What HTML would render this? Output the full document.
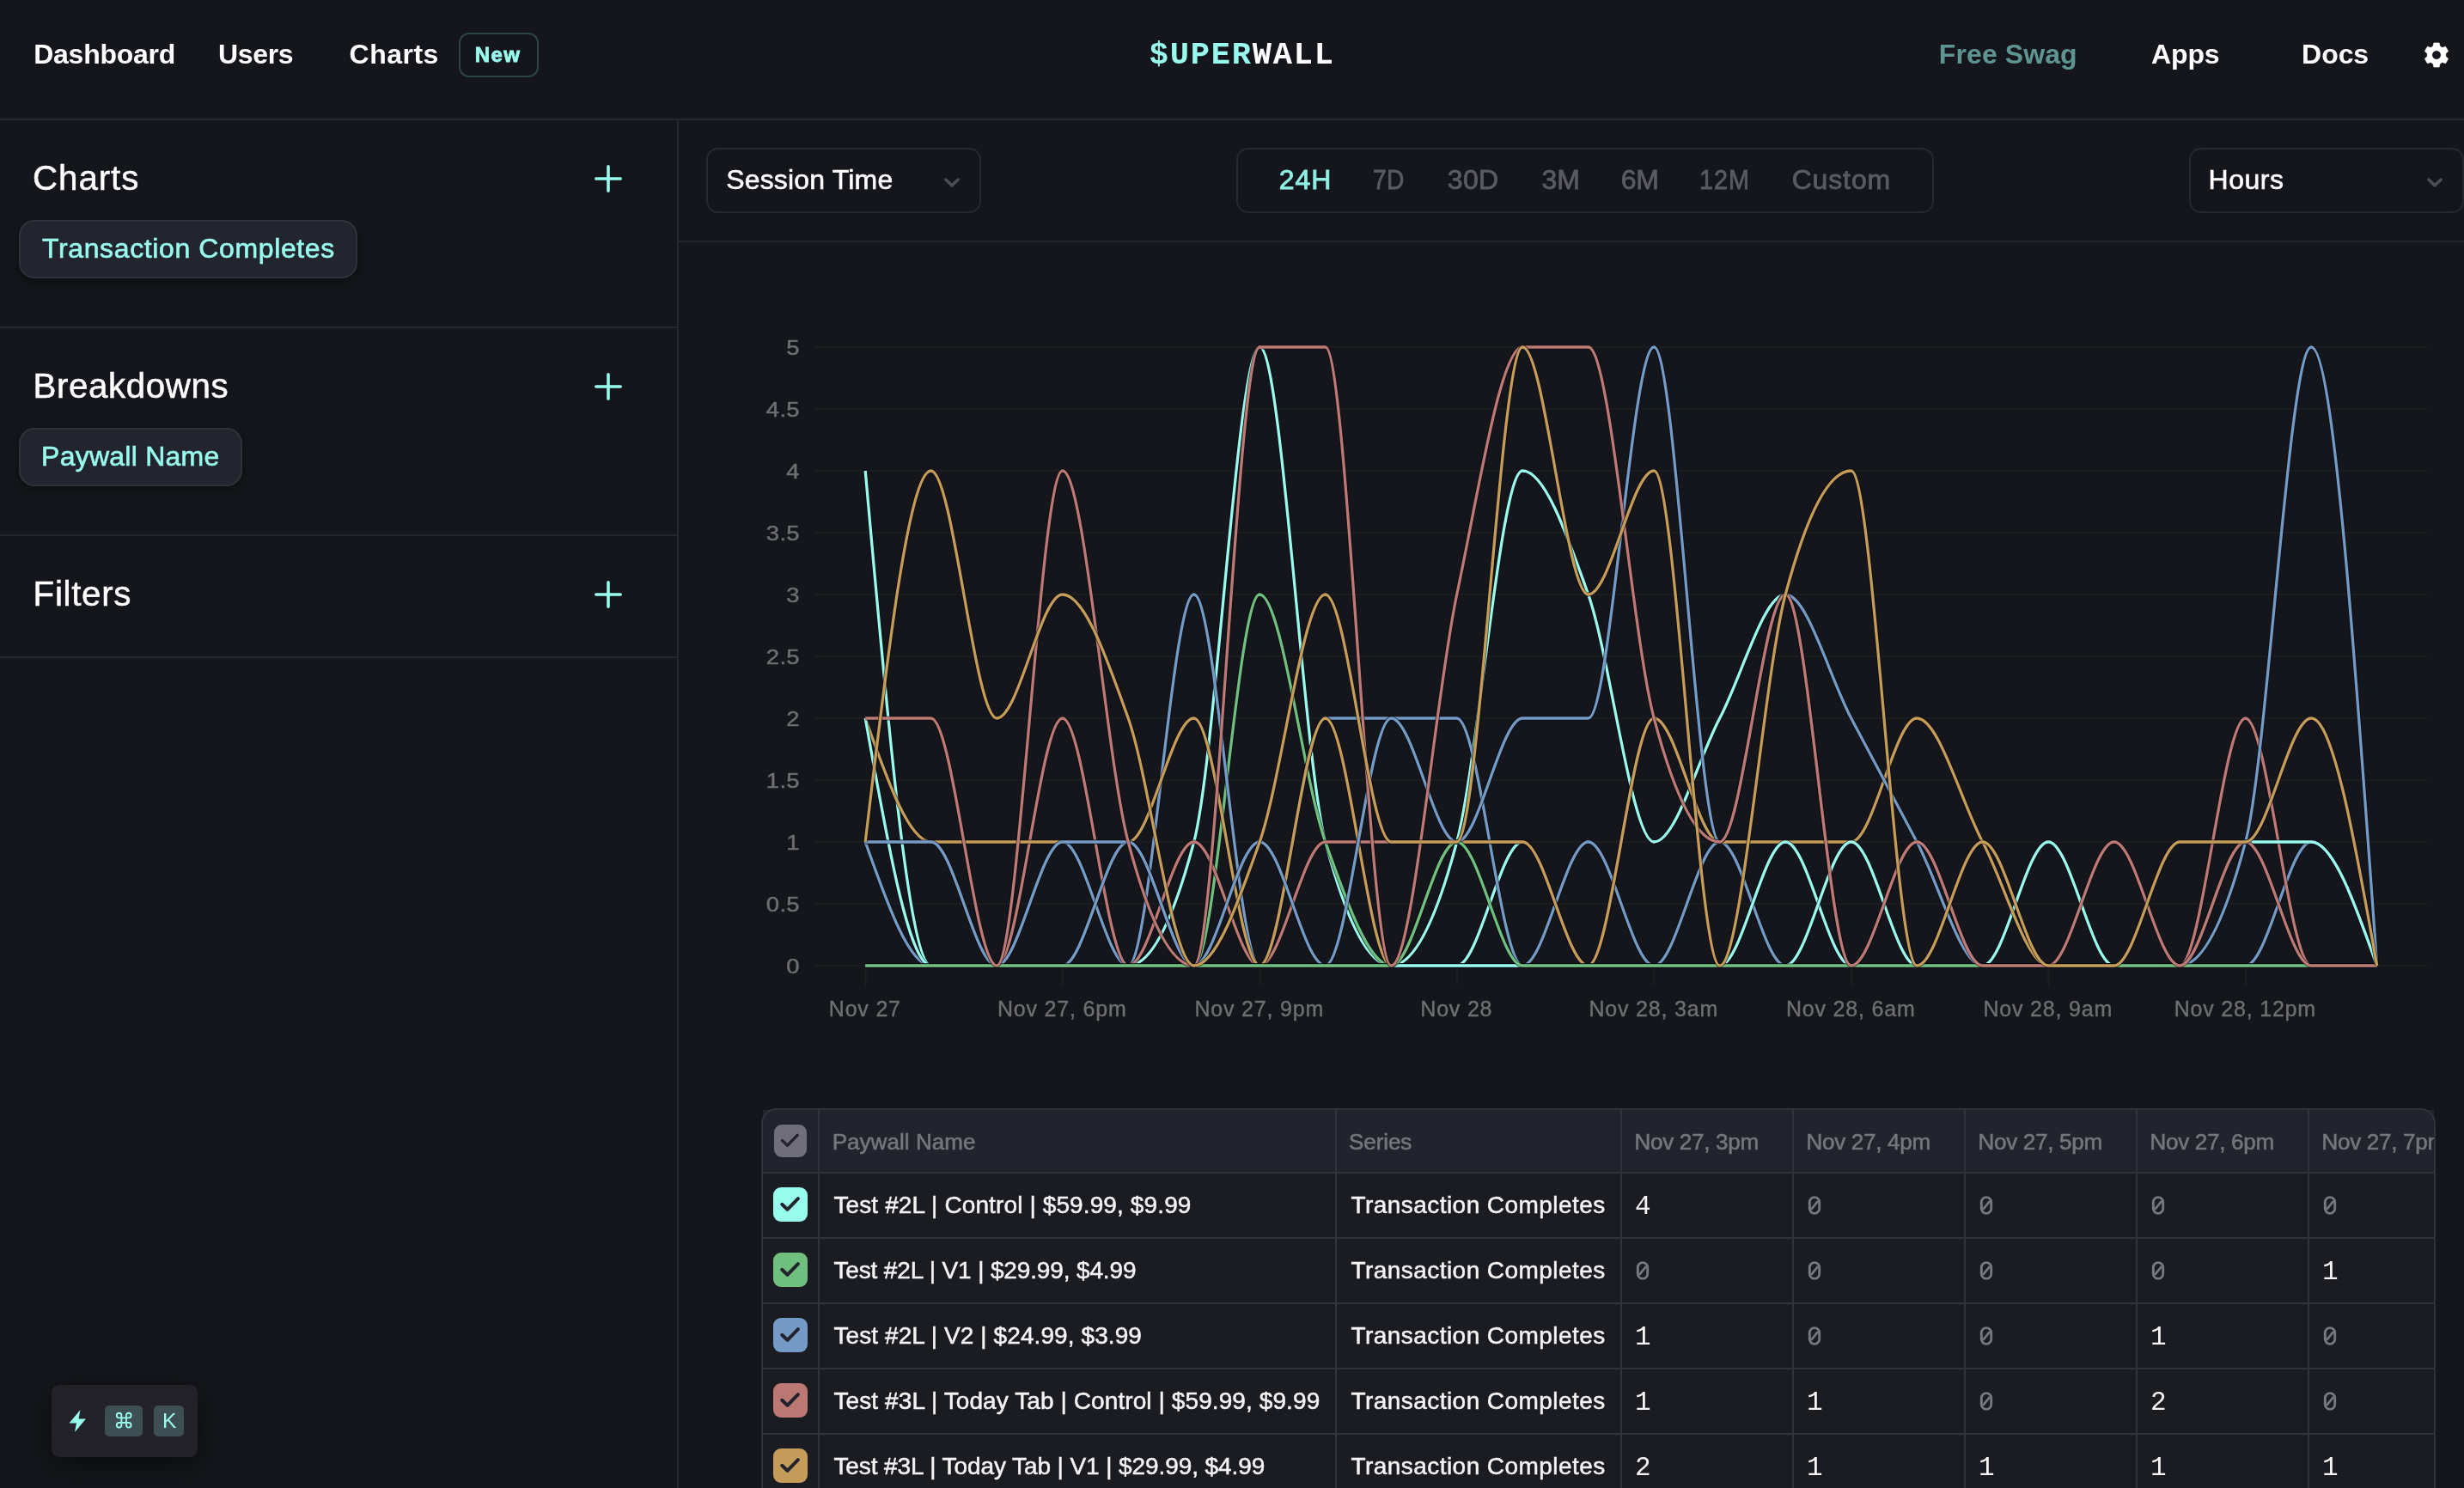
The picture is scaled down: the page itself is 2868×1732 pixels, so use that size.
<!DOCTYPE html>
<html><head><meta charset="utf-8"><title>Superwall Charts</title>
<style>
html,body{margin:0;padding:0;background:#14161b;}
html{width:2868px;height:1732px;overflow:hidden;}
body{width:2868px;height:1732px;position:relative;overflow:hidden;font-family:'Liberation Sans', sans-serif;}
.t{position:absolute;white-space:nowrap;line-height:1;}
.b{position:absolute;}
#w{position:absolute;left:0;top:0;width:2868px;height:1732px;will-change:transform;overflow:hidden;}
</style></head><body><div id="w">
<div class="b" style="left:0px;top:138px;width:2868px;height:2px;background:#25272d"></div>
<div class="t" style="left:39.26px;top:47.1px;font-size:32px;color:#fff;font-weight:700;letter-spacing:-0.270px;font-family:'Liberation Sans', sans-serif;">Dashboard</div>
<div class="t" style="left:253.88px;top:47.1px;font-size:32px;color:#fff;font-weight:700;letter-spacing:-0.315px;font-family:'Liberation Sans', sans-serif;">Users</div>
<div class="t" style="left:406.62px;top:47.1px;font-size:32px;color:#fff;font-weight:700;letter-spacing:0.468px;font-family:'Liberation Sans', sans-serif;">Charts</div>
<div class="b" style="left:534px;top:38px;width:93px;height:52px;border:2px solid #2c4647;border-radius:12px;box-sizing:border-box"></div>
<div class="t" style="left:552.78px;top:52.1px;font-size:24px;color:#98fbee;font-weight:700;letter-spacing:1.440px;font-family:'Liberation Sans', sans-serif;-webkit-text-stroke:0.8px #98fbee">New</div>
<div class="t" style="left:1337.64px;top:46.1px;font-size:37px;color:#fff;font-weight:700;letter-spacing:1.823px;font-family:'Liberation Mono', monospace;"><span style="color:#98fbee">$UPER</span><span style="color:#fff">WALL</span></div>
<div class="t" style="left:2256.82px;top:47.2px;font-size:32px;color:#5e9591;font-weight:700;letter-spacing:0.090px;font-family:'Liberation Sans', sans-serif;">Free Swag</div>
<div class="t" style="left:2504.10px;top:47.2px;font-size:32px;color:#fff;font-weight:700;letter-spacing:-0.180px;font-family:'Liberation Sans', sans-serif;">Apps</div>
<div class="t" style="left:2679.10px;top:47.2px;font-size:32px;color:#fff;font-weight:700;letter-spacing:-0.060px;font-family:'Liberation Sans', sans-serif;">Docs</div>
<svg style="position:absolute;left:2818px;top:46px" width="36" height="36" viewBox="0 0 36 36"><path fill="#fff" fill-rule="evenodd" stroke="#fff" stroke-width="0.7" stroke-linejoin="round" d="M21.96,7.95L21.11,3.99L14.89,3.99L14.04,7.95A10.8,10.8 0 0 0 11.28,9.55L7.42,8.31L4.31,13.68L7.32,16.40A10.8,10.8 0 0 0 7.32,19.60L4.31,22.32L7.42,27.69L11.28,26.45A10.8,10.8 0 0 0 14.04,28.05L14.89,32.01L21.11,32.01L21.96,28.05A10.8,10.8 0 0 0 24.72,26.45L28.58,27.69L31.69,22.32L28.68,19.60A10.8,10.8 0 0 0 28.68,16.40L31.69,13.68L28.58,8.31L24.72,9.55A10.8,10.8 0 0 0 21.96,7.95ZM23.3,18A5.3,5.3 0 1 0 12.7,18A5.3,5.3 0 1 0 23.3,18Z"/></svg>
<div class="b" style="left:788px;top:140px;width:2px;height:1592px;background:#25272d"></div>
<div class="t" style="left:38.04px;top:187.9px;font-size:40.3px;color:#fff;font-weight:400;letter-spacing:0.936px;font-family:'Liberation Sans', sans-serif;-webkit-text-stroke:0.5px #fff">Charts</div>
<svg style="position:absolute;left:692px;top:192px" width="32" height="32" viewBox="0 0 32 32"><path d="M16 1.8v28.4M1.8 16h28.4" stroke="#98fbee" stroke-width="3.6" stroke-linecap="round" fill="none"/></svg>
<div class="b" style="left:22.3px;top:255.9px;width:393.7px;height:67.9px;background:#23252e;border:2px solid #30323a;border-radius:18px;box-sizing:border-box;box-shadow:0 4px 10px rgba(0,0,0,.35)"></div>
<div class="t" style="left:49.00px;top:273.1px;font-size:32px;color:#98fbee;font-weight:400;letter-spacing:0.621px;font-family:'Liberation Sans', sans-serif;-webkit-text-stroke:0.6px #98fbee">Transaction Completes</div>
<div class="b" style="left:0px;top:380px;width:788px;height:2px;background:#25272d"></div>
<div class="t" style="left:38.58px;top:429.9px;font-size:40.3px;color:#fff;font-weight:400;letter-spacing:0.600px;font-family:'Liberation Sans', sans-serif;-webkit-text-stroke:0.5px #fff">Breakdowns</div>
<svg style="position:absolute;left:692px;top:434px" width="32" height="32" viewBox="0 0 32 32"><path d="M16 1.8v28.4M1.8 16h28.4" stroke="#98fbee" stroke-width="3.6" stroke-linecap="round" fill="none"/></svg>
<div class="b" style="left:22.3px;top:497.9px;width:259.4px;height:67.9px;background:#23252e;border:2px solid #30323a;border-radius:18px;box-sizing:border-box;box-shadow:0 4px 10px rgba(0,0,0,.35)"></div>
<div class="t" style="left:48.10px;top:514.9px;font-size:32px;color:#98fbee;font-weight:400;letter-spacing:0.245px;font-family:'Liberation Sans', sans-serif;-webkit-text-stroke:0.6px #98fbee">Paywall Name</div>
<div class="b" style="left:0px;top:622px;width:788px;height:2px;background:#25272d"></div>
<div class="t" style="left:38.58px;top:671.7px;font-size:40.3px;color:#fff;font-weight:400;letter-spacing:0.690px;font-family:'Liberation Sans', sans-serif;-webkit-text-stroke:0.5px #fff">Filters</div>
<svg style="position:absolute;left:692px;top:676px" width="32" height="32" viewBox="0 0 32 32"><path d="M16 1.8v28.4M1.8 16h28.4" stroke="#98fbee" stroke-width="3.6" stroke-linecap="round" fill="none"/></svg>
<div class="b" style="left:0px;top:764px;width:788px;height:2px;background:#25272d"></div>
<div class="b" style="left:60px;top:1612px;width:170px;height:84px;background:#232228;border-radius:9px;box-shadow:0 10px 30px rgba(0,0,0,.45)"></div>
<svg style="position:absolute;left:78px;top:1640px" width="24" height="28" viewBox="0 0 24 28"><path d="M15.5 1 L2.5 16.5 H11 L9 27 L22 11.5 H13.5 Z" fill="#98fbee"/></svg>
<div class="b" style="left:122px;top:1636px;width:44px;height:36px;background:#3e4f53;border-radius:5px"></div>
<div class="b" style="left:179px;top:1636px;width:35px;height:36px;background:#3e4f53;border-radius:5px"></div>
<svg style="position:absolute;left:132.8px;top:1642.1px" width="22.4" height="22.4" viewBox="0 0 24 24" fill="none" stroke="#98fbee" stroke-width="2" stroke-linecap="round" stroke-linejoin="round"><path d="M18 3a3 3 0 0 0-3 3v12a3 3 0 0 0 3 3 3 3 0 0 0 3-3 3 3 0 0 0-3-3H6a3 3 0 0 0-3 3 3 3 0 0 0 3 3 3 3 0 0 0 3-3V6a3 3 0 0 0-3-3 3 3 0 0 0-3 3 3 3 0 0 0 3 3h12a3 3 0 0 0 3-3 3 3 0 0 0-3-3z"/></svg>
<div class="t" style="left:189.00px;top:1641.5px;font-size:24.5px;color:#98fbee;font-weight:400;letter-spacing:0.000px;font-family:'Liberation Sans', sans-serif;">K</div>
<div class="b" style="left:822px;top:172px;width:320px;height:76px;border:2px solid #26282d;border-radius:14px;box-sizing:border-box"></div>
<div class="t" style="left:845.16px;top:192.9px;font-size:32px;color:#fff;font-weight:400;letter-spacing:0.180px;font-family:'Liberation Sans', sans-serif;-webkit-text-stroke:0.6px #fff">Session Time</div>
<svg style="position:absolute;left:1098px;top:205.70000000000002px" width="20" height="13.4" viewBox="0 0 24 16"><path d="M3.4 3.6 L12 11.8 L20.6 3.6" stroke="#4d4e54" stroke-width="4.3" fill="none" stroke-linecap="round" stroke-linejoin="round"/></svg>
<div class="b" style="left:1439px;top:172px;width:812px;height:76px;border:2px solid #26282d;border-radius:14px;box-sizing:border-box"></div>
<div class="t" style="left:1488.64px;top:193.4px;font-size:32px;color:#8fefe3;font-weight:400;letter-spacing:0.990px;font-family:'Liberation Sans', sans-serif;-webkit-text-stroke:0.85px #8fefe3">24H</div>
<div class="t" style="left:1598.02px;top:193.4px;font-size:32px;color:#5a5b61;font-weight:400;letter-spacing:0.360px;font-family:'Liberation Sans', sans-serif;-webkit-text-stroke:0.85px #5a5b61;transform:scaleX(0.88);transform-origin:0 50%">7D</div>
<div class="t" style="left:1684.78px;top:193.4px;font-size:32px;color:#5a5b61;font-weight:400;letter-spacing:0.360px;font-family:'Liberation Sans', sans-serif;-webkit-text-stroke:0.85px #5a5b61">30D</div>
<div class="t" style="left:1794.54px;top:193.4px;font-size:32px;color:#5a5b61;font-weight:400;letter-spacing:-0.180px;font-family:'Liberation Sans', sans-serif;-webkit-text-stroke:0.85px #5a5b61">3M</div>
<div class="t" style="left:1886.64px;top:193.4px;font-size:32px;color:#5a5b61;font-weight:400;letter-spacing:-0.180px;font-family:'Liberation Sans', sans-serif;-webkit-text-stroke:0.85px #5a5b61">6M</div>
<div class="t" style="left:1978.12px;top:193.4px;font-size:32px;color:#5a5b61;font-weight:400;letter-spacing:1.080px;font-family:'Liberation Sans', sans-serif;-webkit-text-stroke:0.85px #5a5b61;transform:scaleX(0.9);transform-origin:0 50%">12M</div>
<div class="t" style="left:2085.64px;top:193.4px;font-size:32px;color:#5a5b61;font-weight:400;letter-spacing:0.864px;font-family:'Liberation Sans', sans-serif;-webkit-text-stroke:0.85px #5a5b61">Custom</div>
<div class="b" style="left:2548px;top:172px;width:320px;height:76px;border:2px solid #26282d;border-radius:14px;box-sizing:border-box"></div>
<div class="t" style="left:2570.50px;top:192.9px;font-size:32px;color:#fff;font-weight:400;letter-spacing:0.540px;font-family:'Liberation Sans', sans-serif;-webkit-text-stroke:0.6px #fff">Hours</div>
<svg style="position:absolute;left:2824px;top:205.70000000000002px" width="20" height="13.4" viewBox="0 0 24 16"><path d="M3.4 3.6 L12 11.8 L20.6 3.6" stroke="#4d4e54" stroke-width="4.3" fill="none" stroke-linecap="round" stroke-linejoin="round"/></svg>
<div class="b" style="left:790px;top:280px;width:2078px;height:2px;background:#25272d"></div>
<svg class="chart" width="2868" height="1732" viewBox="0 0 2868 1732" style="position:absolute;left:0;top:0">
<rect x="948" y="403" width="1878" height="2" fill="#1b1c1f"/>
<rect x="948" y="475" width="1878" height="2" fill="#1b1c1f"/>
<rect x="948" y="547" width="1878" height="2" fill="#1b1c1f"/>
<rect x="948" y="619" width="1878" height="2" fill="#1b1c1f"/>
<rect x="948" y="691" width="1878" height="2" fill="#1b1c1f"/>
<rect x="948" y="763" width="1878" height="2" fill="#1b1c1f"/>
<rect x="948" y="835" width="1878" height="2" fill="#1b1c1f"/>
<rect x="948" y="907" width="1878" height="2" fill="#1b1c1f"/>
<rect x="948" y="979" width="1878" height="2" fill="#1b1c1f"/>
<rect x="948" y="1051" width="1878" height="2" fill="#1b1c1f"/>
<rect x="948" y="1123" width="1878" height="2" fill="#1b1c1f"/>
<rect x="1006.5" y="1125" width="2" height="22" fill="#1d1e22"/>
<rect x="1236.0" y="1125" width="2" height="22" fill="#1d1e22"/>
<rect x="1465.5" y="1125" width="2" height="22" fill="#1d1e22"/>
<rect x="1695.0" y="1125" width="2" height="22" fill="#1d1e22"/>
<rect x="1924.5" y="1125" width="2" height="22" fill="#1d1e22"/>
<rect x="2154.0" y="1125" width="2" height="22" fill="#1d1e22"/>
<rect x="2383.5" y="1125" width="2" height="22" fill="#1d1e22"/>
<rect x="2613.0" y="1125" width="2" height="22" fill="#1d1e22"/>
<g fill="none" stroke-linejoin="round" stroke-linecap="butt">
<path d="M1007.2,548.0C1032.7,836.0 1058.2,1124.0 1083.7,1124.0L1160.2,1124.0L1236.7,1124.0L1313.2,1124.0C1338.7,1124.0 1364.2,1076.0 1389.7,980.0C1415.2,884.0 1440.7,404.0 1466.2,404.0C1491.7,404.0 1517.2,884.0 1542.7,980.0C1568.2,1076.0 1593.7,1124.0 1619.2,1124.0C1644.7,1124.0 1670.2,1076.0 1695.7,980.0C1721.2,884.0 1746.7,548.0 1772.2,548.0C1797.7,548.0 1823.2,620.0 1848.7,692.0C1874.2,764.0 1899.7,980.0 1925.2,980.0C1950.7,980.0 1976.2,884.0 2001.7,836.0C2027.2,788.0 2052.7,692.0 2078.2,692.0C2103.7,692.0 2129.2,1124.0 2154.7,1124.0L2231.2,1124.0L2307.7,1124.0C2333.2,1124.0 2358.7,980.0 2384.2,980.0C2409.7,980.0 2435.2,1124.0 2460.7,1124.0L2537.2,1124.0L2613.7,1124.0L2690.2,1124.0L2766.7,1124.0" stroke="#0a0a12" stroke-opacity="0.7" stroke-width="4.9"/>
<path d="M1007.2,548.0C1032.7,836.0 1058.2,1124.0 1083.7,1124.0L1160.2,1124.0L1236.7,1124.0L1313.2,1124.0C1338.7,1124.0 1364.2,1076.0 1389.7,980.0C1415.2,884.0 1440.7,404.0 1466.2,404.0C1491.7,404.0 1517.2,884.0 1542.7,980.0C1568.2,1076.0 1593.7,1124.0 1619.2,1124.0C1644.7,1124.0 1670.2,1076.0 1695.7,980.0C1721.2,884.0 1746.7,548.0 1772.2,548.0C1797.7,548.0 1823.2,620.0 1848.7,692.0C1874.2,764.0 1899.7,980.0 1925.2,980.0C1950.7,980.0 1976.2,884.0 2001.7,836.0C2027.2,788.0 2052.7,692.0 2078.2,692.0C2103.7,692.0 2129.2,1124.0 2154.7,1124.0L2231.2,1124.0L2307.7,1124.0C2333.2,1124.0 2358.7,980.0 2384.2,980.0C2409.7,980.0 2435.2,1124.0 2460.7,1124.0L2537.2,1124.0L2613.7,1124.0L2690.2,1124.0L2766.7,1124.0" stroke="#98fbee" stroke-width="3.3"/>
<path d="M1007.2,1124.0L1083.7,1124.0L1160.2,1124.0L1236.7,1124.0L1313.2,1124.0L1389.7,1124.0L1466.2,1124.0L1542.7,1124.0L1619.2,1124.0L1695.7,1124.0C1721.2,1124.0 1746.7,980.0 1772.2,980.0C1797.7,980.0 1823.2,1124.0 1848.7,1124.0L1925.2,1124.0L2001.7,1124.0L2078.2,1124.0L2154.7,1124.0L2231.2,1124.0L2307.7,1124.0L2384.2,1124.0L2460.7,1124.0L2537.2,1124.0L2613.7,1124.0L2690.2,1124.0L2766.7,1124.0" stroke="#0a0a12" stroke-opacity="0.7" stroke-width="4.9"/>
<path d="M1007.2,1124.0L1083.7,1124.0L1160.2,1124.0L1236.7,1124.0L1313.2,1124.0L1389.7,1124.0L1466.2,1124.0L1542.7,1124.0L1619.2,1124.0L1695.7,1124.0C1721.2,1124.0 1746.7,980.0 1772.2,980.0C1797.7,980.0 1823.2,1124.0 1848.7,1124.0L1925.2,1124.0L2001.7,1124.0L2078.2,1124.0L2154.7,1124.0L2231.2,1124.0L2307.7,1124.0L2384.2,1124.0L2460.7,1124.0L2537.2,1124.0L2613.7,1124.0L2690.2,1124.0L2766.7,1124.0" stroke="#98fbee" stroke-width="3.3"/>
<path d="M1007.2,1124.0L1083.7,1124.0L1160.2,1124.0L1236.7,1124.0C1262.2,1124.0 1287.7,980.0 1313.2,980.0C1338.7,980.0 1364.2,1124.0 1389.7,1124.0C1415.2,1124.0 1440.7,692.0 1466.2,692.0C1491.7,692.0 1517.2,908.0 1542.7,980.0C1568.2,1052.0 1593.7,1124.0 1619.2,1124.0L1695.7,1124.0L1772.2,1124.0L1848.7,1124.0L1925.2,1124.0L2001.7,1124.0L2078.2,1124.0L2154.7,1124.0L2231.2,1124.0L2307.7,1124.0L2384.2,1124.0L2460.7,1124.0L2537.2,1124.0L2613.7,1124.0L2690.2,1124.0L2766.7,1124.0" stroke="#0a0a12" stroke-opacity="0.7" stroke-width="4.9"/>
<path d="M1007.2,1124.0L1083.7,1124.0L1160.2,1124.0L1236.7,1124.0C1262.2,1124.0 1287.7,980.0 1313.2,980.0C1338.7,980.0 1364.2,1124.0 1389.7,1124.0C1415.2,1124.0 1440.7,692.0 1466.2,692.0C1491.7,692.0 1517.2,908.0 1542.7,980.0C1568.2,1052.0 1593.7,1124.0 1619.2,1124.0L1695.7,1124.0L1772.2,1124.0L1848.7,1124.0L1925.2,1124.0L2001.7,1124.0L2078.2,1124.0L2154.7,1124.0L2231.2,1124.0L2307.7,1124.0L2384.2,1124.0L2460.7,1124.0L2537.2,1124.0L2613.7,1124.0L2690.2,1124.0L2766.7,1124.0" stroke="#6fc07e" stroke-width="3.3"/>
<path d="M1007.2,980.0C1032.7,1052.0 1058.2,1124.0 1083.7,1124.0L1160.2,1124.0C1185.7,1124.0 1211.2,980.0 1236.7,980.0C1262.2,980.0 1287.7,1124.0 1313.2,1124.0C1338.7,1124.0 1364.2,692.0 1389.7,692.0C1415.2,692.0 1440.7,1124.0 1466.2,1124.0C1491.7,1124.0 1517.2,836.0 1542.7,836.0L1619.2,836.0L1695.7,836.0C1721.2,836.0 1746.7,1124.0 1772.2,1124.0C1797.7,1124.0 1823.2,980.0 1848.7,980.0C1874.2,980.0 1899.7,1124.0 1925.2,1124.0C1950.7,1124.0 1976.2,980.0 2001.7,980.0C2027.2,980.0 2052.7,1124.0 2078.2,1124.0L2154.7,1124.0L2231.2,1124.0L2307.7,1124.0L2384.2,1124.0L2460.7,1124.0L2537.2,1124.0L2613.7,1124.0C2639.2,1124.0 2664.7,980.0 2690.2,980.0C2715.7,980.0 2741.2,1052.0 2766.7,1124.0" stroke="#0a0a12" stroke-opacity="0.7" stroke-width="4.9"/>
<path d="M1007.2,980.0C1032.7,1052.0 1058.2,1124.0 1083.7,1124.0L1160.2,1124.0C1185.7,1124.0 1211.2,980.0 1236.7,980.0C1262.2,980.0 1287.7,1124.0 1313.2,1124.0C1338.7,1124.0 1364.2,692.0 1389.7,692.0C1415.2,692.0 1440.7,1124.0 1466.2,1124.0C1491.7,1124.0 1517.2,836.0 1542.7,836.0L1619.2,836.0L1695.7,836.0C1721.2,836.0 1746.7,1124.0 1772.2,1124.0C1797.7,1124.0 1823.2,980.0 1848.7,980.0C1874.2,980.0 1899.7,1124.0 1925.2,1124.0C1950.7,1124.0 1976.2,980.0 2001.7,980.0C2027.2,980.0 2052.7,1124.0 2078.2,1124.0L2154.7,1124.0L2231.2,1124.0L2307.7,1124.0L2384.2,1124.0L2460.7,1124.0L2537.2,1124.0L2613.7,1124.0C2639.2,1124.0 2664.7,980.0 2690.2,980.0C2715.7,980.0 2741.2,1052.0 2766.7,1124.0" stroke="#739bc5" stroke-width="3.3"/>
<path d="M1007.2,980.0L1083.7,980.0C1109.2,980.0 1134.7,1124.0 1160.2,1124.0C1185.7,1124.0 1211.2,836.0 1236.7,836.0C1262.2,836.0 1287.7,1124.0 1313.2,1124.0C1338.7,1124.0 1364.2,980.0 1389.7,980.0C1415.2,980.0 1440.7,1124.0 1466.2,1124.0C1491.7,1124.0 1517.2,980.0 1542.7,980.0L1619.2,980.0L1695.7,980.0L1772.2,980.0C1797.7,980.0 1823.2,1124.0 1848.7,1124.0C1874.2,1124.0 1899.7,836.0 1925.2,836.0C1950.7,836.0 1976.2,980.0 2001.7,980.0C2027.2,980.0 2052.7,692.0 2078.2,692.0C2103.7,692.0 2129.2,1124.0 2154.7,1124.0C2180.2,1124.0 2205.7,980.0 2231.2,980.0C2256.7,980.0 2282.2,1124.0 2307.7,1124.0L2384.2,1124.0L2460.7,1124.0L2537.2,1124.0C2562.7,1124.0 2588.2,836.0 2613.7,836.0C2639.2,836.0 2664.7,1124.0 2690.2,1124.0L2766.7,1124.0" stroke="#0a0a12" stroke-opacity="0.7" stroke-width="4.9"/>
<path d="M1007.2,980.0L1083.7,980.0C1109.2,980.0 1134.7,1124.0 1160.2,1124.0C1185.7,1124.0 1211.2,836.0 1236.7,836.0C1262.2,836.0 1287.7,1124.0 1313.2,1124.0C1338.7,1124.0 1364.2,980.0 1389.7,980.0C1415.2,980.0 1440.7,1124.0 1466.2,1124.0C1491.7,1124.0 1517.2,980.0 1542.7,980.0L1619.2,980.0L1695.7,980.0L1772.2,980.0C1797.7,980.0 1823.2,1124.0 1848.7,1124.0C1874.2,1124.0 1899.7,836.0 1925.2,836.0C1950.7,836.0 1976.2,980.0 2001.7,980.0C2027.2,980.0 2052.7,692.0 2078.2,692.0C2103.7,692.0 2129.2,1124.0 2154.7,1124.0C2180.2,1124.0 2205.7,980.0 2231.2,980.0C2256.7,980.0 2282.2,1124.0 2307.7,1124.0L2384.2,1124.0L2460.7,1124.0L2537.2,1124.0C2562.7,1124.0 2588.2,836.0 2613.7,836.0C2639.2,836.0 2664.7,1124.0 2690.2,1124.0L2766.7,1124.0" stroke="#bd7973" stroke-width="3.3"/>
<path d="M1007.2,836.0C1032.7,908.0 1058.2,980.0 1083.7,980.0L1160.2,980.0L1236.7,980.0L1313.2,980.0C1338.7,980.0 1364.2,836.0 1389.7,836.0C1415.2,836.0 1440.7,1124.0 1466.2,1124.0C1491.7,1124.0 1517.2,836.0 1542.7,836.0C1568.2,836.0 1593.7,1124.0 1619.2,1124.0C1644.7,1124.0 1670.2,980.0 1695.7,980.0L1772.2,980.0C1797.7,980.0 1823.2,1124.0 1848.7,1124.0C1874.2,1124.0 1899.7,836.0 1925.2,836.0C1950.7,836.0 1976.2,980.0 2001.7,980.0L2078.2,980.0L2154.7,980.0C2180.2,980.0 2205.7,836.0 2231.2,836.0C2256.7,836.0 2282.2,932.0 2307.7,980.0C2333.2,1028.0 2358.7,1124.0 2384.2,1124.0L2460.7,1124.0L2537.2,1124.0L2613.7,1124.0L2690.2,1124.0L2766.7,1124.0" stroke="#0a0a12" stroke-opacity="0.7" stroke-width="4.9"/>
<path d="M1007.2,836.0C1032.7,908.0 1058.2,980.0 1083.7,980.0L1160.2,980.0L1236.7,980.0L1313.2,980.0C1338.7,980.0 1364.2,836.0 1389.7,836.0C1415.2,836.0 1440.7,1124.0 1466.2,1124.0C1491.7,1124.0 1517.2,836.0 1542.7,836.0C1568.2,836.0 1593.7,1124.0 1619.2,1124.0C1644.7,1124.0 1670.2,980.0 1695.7,980.0L1772.2,980.0C1797.7,980.0 1823.2,1124.0 1848.7,1124.0C1874.2,1124.0 1899.7,836.0 1925.2,836.0C1950.7,836.0 1976.2,980.0 2001.7,980.0L2078.2,980.0L2154.7,980.0C2180.2,980.0 2205.7,836.0 2231.2,836.0C2256.7,836.0 2282.2,932.0 2307.7,980.0C2333.2,1028.0 2358.7,1124.0 2384.2,1124.0L2460.7,1124.0L2537.2,1124.0L2613.7,1124.0L2690.2,1124.0L2766.7,1124.0" stroke="#c59c58" stroke-width="3.3"/>
<path d="M1007.2,836.0C1032.7,980.0 1058.2,1124.0 1083.7,1124.0L1160.2,1124.0L1236.7,1124.0L1313.2,1124.0L1389.7,1124.0L1466.2,1124.0L1542.7,1124.0L1619.2,1124.0L1695.7,1124.0L1772.2,1124.0L1848.7,1124.0L1925.2,1124.0L2001.7,1124.0C2027.2,1124.0 2052.7,980.0 2078.2,980.0C2103.7,980.0 2129.2,1124.0 2154.7,1124.0L2231.2,1124.0L2307.7,1124.0L2384.2,1124.0L2460.7,1124.0L2537.2,1124.0L2613.7,1124.0L2690.2,1124.0L2766.7,1124.0" stroke="#0a0a12" stroke-opacity="0.7" stroke-width="4.9"/>
<path d="M1007.2,836.0C1032.7,980.0 1058.2,1124.0 1083.7,1124.0L1160.2,1124.0L1236.7,1124.0L1313.2,1124.0L1389.7,1124.0L1466.2,1124.0L1542.7,1124.0L1619.2,1124.0L1695.7,1124.0L1772.2,1124.0L1848.7,1124.0L1925.2,1124.0L2001.7,1124.0C2027.2,1124.0 2052.7,980.0 2078.2,980.0C2103.7,980.0 2129.2,1124.0 2154.7,1124.0L2231.2,1124.0L2307.7,1124.0L2384.2,1124.0L2460.7,1124.0L2537.2,1124.0L2613.7,1124.0L2690.2,1124.0L2766.7,1124.0" stroke="#98fbee" stroke-width="3.3"/>
<path d="M1007.2,980.0L1083.7,980.0C1109.2,980.0 1134.7,1124.0 1160.2,1124.0L1236.7,1124.0C1262.2,1124.0 1287.7,980.0 1313.2,980.0C1338.7,980.0 1364.2,1124.0 1389.7,1124.0C1415.2,1124.0 1440.7,980.0 1466.2,980.0C1491.7,980.0 1517.2,1124.0 1542.7,1124.0C1568.2,1124.0 1593.7,836.0 1619.2,836.0C1644.7,836.0 1670.2,980.0 1695.7,980.0C1721.2,980.0 1746.7,836.0 1772.2,836.0L1848.7,836.0C1874.2,836.0 1899.7,404.0 1925.2,404.0C1950.7,404.0 1976.2,980.0 2001.7,980.0C2027.2,980.0 2052.7,692.0 2078.2,692.0C2103.7,692.0 2129.2,788.0 2154.7,836.0C2180.2,884.0 2205.7,932.0 2231.2,980.0C2256.7,1028.0 2282.2,1124.0 2307.7,1124.0L2384.2,1124.0L2460.7,1124.0L2537.2,1124.0C2562.7,1124.0 2588.2,1076.0 2613.7,980.0C2639.2,884.0 2664.7,404.0 2690.2,404.0C2715.7,404.0 2741.2,764.0 2766.7,1124.0" stroke="#0a0a12" stroke-opacity="0.7" stroke-width="4.9"/>
<path d="M1007.2,980.0L1083.7,980.0C1109.2,980.0 1134.7,1124.0 1160.2,1124.0L1236.7,1124.0C1262.2,1124.0 1287.7,980.0 1313.2,980.0C1338.7,980.0 1364.2,1124.0 1389.7,1124.0C1415.2,1124.0 1440.7,980.0 1466.2,980.0C1491.7,980.0 1517.2,1124.0 1542.7,1124.0C1568.2,1124.0 1593.7,836.0 1619.2,836.0C1644.7,836.0 1670.2,980.0 1695.7,980.0C1721.2,980.0 1746.7,836.0 1772.2,836.0L1848.7,836.0C1874.2,836.0 1899.7,404.0 1925.2,404.0C1950.7,404.0 1976.2,980.0 2001.7,980.0C2027.2,980.0 2052.7,692.0 2078.2,692.0C2103.7,692.0 2129.2,788.0 2154.7,836.0C2180.2,884.0 2205.7,932.0 2231.2,980.0C2256.7,1028.0 2282.2,1124.0 2307.7,1124.0L2384.2,1124.0L2460.7,1124.0L2537.2,1124.0C2562.7,1124.0 2588.2,1076.0 2613.7,980.0C2639.2,884.0 2664.7,404.0 2690.2,404.0C2715.7,404.0 2741.2,764.0 2766.7,1124.0" stroke="#739bc5" stroke-width="3.3"/>
<path d="M1007.2,1124.0L1083.7,1124.0L1160.2,1124.0C1185.7,1124.0 1211.2,980.0 1236.7,980.0L1313.2,980.0C1338.7,980.0 1364.2,1124.0 1389.7,1124.0L1466.2,1124.0L1542.7,1124.0L1619.2,1124.0L1695.7,1124.0L1772.2,1124.0L1848.7,1124.0L1925.2,1124.0L2001.7,1124.0L2078.2,1124.0L2154.7,1124.0L2231.2,1124.0L2307.7,1124.0L2384.2,1124.0L2460.7,1124.0L2537.2,1124.0L2613.7,1124.0L2690.2,1124.0L2766.7,1124.0" stroke="#0a0a12" stroke-opacity="0.7" stroke-width="4.9"/>
<path d="M1007.2,1124.0L1083.7,1124.0L1160.2,1124.0C1185.7,1124.0 1211.2,980.0 1236.7,980.0L1313.2,980.0C1338.7,980.0 1364.2,1124.0 1389.7,1124.0L1466.2,1124.0L1542.7,1124.0L1619.2,1124.0L1695.7,1124.0L1772.2,1124.0L1848.7,1124.0L1925.2,1124.0L2001.7,1124.0L2078.2,1124.0L2154.7,1124.0L2231.2,1124.0L2307.7,1124.0L2384.2,1124.0L2460.7,1124.0L2537.2,1124.0L2613.7,1124.0L2690.2,1124.0L2766.7,1124.0" stroke="#739bc5" stroke-width="3.3"/>
<path d="M1007.2,1124.0L1083.7,1124.0L1160.2,1124.0L1236.7,1124.0L1313.2,1124.0L1389.7,1124.0L1466.2,1124.0L1542.7,1124.0L1619.2,1124.0L1695.7,1124.0L1772.2,1124.0L1848.7,1124.0L1925.2,1124.0L2001.7,1124.0L2078.2,1124.0C2103.7,1124.0 2129.2,980.0 2154.7,980.0C2180.2,980.0 2205.7,1124.0 2231.2,1124.0L2307.7,1124.0L2384.2,1124.0L2460.7,1124.0L2537.2,1124.0C2562.7,1124.0 2588.2,980.0 2613.7,980.0L2690.2,980.0C2715.7,980.0 2741.2,1052.0 2766.7,1124.0" stroke="#0a0a12" stroke-opacity="0.7" stroke-width="4.9"/>
<path d="M1007.2,1124.0L1083.7,1124.0L1160.2,1124.0L1236.7,1124.0L1313.2,1124.0L1389.7,1124.0L1466.2,1124.0L1542.7,1124.0L1619.2,1124.0L1695.7,1124.0L1772.2,1124.0L1848.7,1124.0L1925.2,1124.0L2001.7,1124.0L2078.2,1124.0C2103.7,1124.0 2129.2,980.0 2154.7,980.0C2180.2,980.0 2205.7,1124.0 2231.2,1124.0L2307.7,1124.0L2384.2,1124.0L2460.7,1124.0L2537.2,1124.0C2562.7,1124.0 2588.2,980.0 2613.7,980.0L2690.2,980.0C2715.7,980.0 2741.2,1052.0 2766.7,1124.0" stroke="#98fbee" stroke-width="3.3"/>
<path d="M1007.2,1124.0L1083.7,1124.0L1160.2,1124.0L1236.7,1124.0L1313.2,1124.0L1389.7,1124.0L1466.2,1124.0L1542.7,1124.0L1619.2,1124.0C1644.7,1124.0 1670.2,980.0 1695.7,980.0C1721.2,980.0 1746.7,1124.0 1772.2,1124.0L1848.7,1124.0L1925.2,1124.0L2001.7,1124.0L2078.2,1124.0L2154.7,1124.0L2231.2,1124.0L2307.7,1124.0L2384.2,1124.0L2460.7,1124.0L2537.2,1124.0L2613.7,1124.0L2690.2,1124.0L2766.7,1124.0" stroke="#0a0a12" stroke-opacity="0.7" stroke-width="4.9"/>
<path d="M1007.2,1124.0L1083.7,1124.0L1160.2,1124.0L1236.7,1124.0L1313.2,1124.0L1389.7,1124.0L1466.2,1124.0L1542.7,1124.0L1619.2,1124.0C1644.7,1124.0 1670.2,980.0 1695.7,980.0C1721.2,980.0 1746.7,1124.0 1772.2,1124.0L1848.7,1124.0L1925.2,1124.0L2001.7,1124.0L2078.2,1124.0L2154.7,1124.0L2231.2,1124.0L2307.7,1124.0L2384.2,1124.0L2460.7,1124.0L2537.2,1124.0L2613.7,1124.0L2690.2,1124.0L2766.7,1124.0" stroke="#6fc07e" stroke-width="3.3"/>
<path d="M1007.2,836.0L1083.7,836.0C1109.2,836.0 1134.7,1124.0 1160.2,1124.0C1185.7,1124.0 1211.2,548.0 1236.7,548.0C1262.2,548.0 1287.7,884.0 1313.2,980.0C1338.7,1076.0 1364.2,1124.0 1389.7,1124.0C1415.2,1124.0 1440.7,404.0 1466.2,404.0L1542.7,404.0C1568.2,404.0 1593.7,1124.0 1619.2,1124.0C1644.7,1124.0 1670.2,812.0 1695.7,692.0C1721.2,572.0 1746.7,404.0 1772.2,404.0L1848.7,404.0C1874.2,404.0 1899.7,740.0 1925.2,836.0C1950.7,932.0 1976.2,980.0 2001.7,980.0C2027.2,980.0 2052.7,692.0 2078.2,692.0C2103.7,692.0 2129.2,1124.0 2154.7,1124.0C2180.2,1124.0 2205.7,980.0 2231.2,980.0C2256.7,980.0 2282.2,1124.0 2307.7,1124.0L2384.2,1124.0C2409.7,1124.0 2435.2,980.0 2460.7,980.0C2486.2,980.0 2511.7,1124.0 2537.2,1124.0C2562.7,1124.0 2588.2,980.0 2613.7,980.0C2639.2,980.0 2664.7,1124.0 2690.2,1124.0L2766.7,1124.0" stroke="#0a0a12" stroke-opacity="0.7" stroke-width="4.9"/>
<path d="M1007.2,836.0L1083.7,836.0C1109.2,836.0 1134.7,1124.0 1160.2,1124.0C1185.7,1124.0 1211.2,548.0 1236.7,548.0C1262.2,548.0 1287.7,884.0 1313.2,980.0C1338.7,1076.0 1364.2,1124.0 1389.7,1124.0C1415.2,1124.0 1440.7,404.0 1466.2,404.0L1542.7,404.0C1568.2,404.0 1593.7,1124.0 1619.2,1124.0C1644.7,1124.0 1670.2,812.0 1695.7,692.0C1721.2,572.0 1746.7,404.0 1772.2,404.0L1848.7,404.0C1874.2,404.0 1899.7,740.0 1925.2,836.0C1950.7,932.0 1976.2,980.0 2001.7,980.0C2027.2,980.0 2052.7,692.0 2078.2,692.0C2103.7,692.0 2129.2,1124.0 2154.7,1124.0C2180.2,1124.0 2205.7,980.0 2231.2,980.0C2256.7,980.0 2282.2,1124.0 2307.7,1124.0L2384.2,1124.0C2409.7,1124.0 2435.2,980.0 2460.7,980.0C2486.2,980.0 2511.7,1124.0 2537.2,1124.0C2562.7,1124.0 2588.2,980.0 2613.7,980.0C2639.2,980.0 2664.7,1124.0 2690.2,1124.0L2766.7,1124.0" stroke="#bd7973" stroke-width="3.3"/>
<path d="M1007.2,980.0C1032.7,764.0 1058.2,548.0 1083.7,548.0C1109.2,548.0 1134.7,836.0 1160.2,836.0C1185.7,836.0 1211.2,692.0 1236.7,692.0C1262.2,692.0 1287.7,764.0 1313.2,836.0C1338.7,908.0 1364.2,1124.0 1389.7,1124.0C1415.2,1124.0 1440.7,1052.0 1466.2,980.0C1491.7,908.0 1517.2,692.0 1542.7,692.0C1568.2,692.0 1593.7,980.0 1619.2,980.0L1695.7,980.0C1721.2,980.0 1746.7,404.0 1772.2,404.0C1797.7,404.0 1823.2,692.0 1848.7,692.0C1874.2,692.0 1899.7,548.0 1925.2,548.0C1950.7,548.0 1976.2,1124.0 2001.7,1124.0C2027.2,1124.0 2052.7,788.0 2078.2,692.0C2103.7,596.0 2129.2,548.0 2154.7,548.0C2180.2,548.0 2205.7,1124.0 2231.2,1124.0C2256.7,1124.0 2282.2,980.0 2307.7,980.0C2333.2,980.0 2358.7,1124.0 2384.2,1124.0L2460.7,1124.0C2486.2,1124.0 2511.7,980.0 2537.2,980.0L2613.7,980.0C2639.2,980.0 2664.7,836.0 2690.2,836.0C2715.7,836.0 2741.2,980.0 2766.7,1124.0" stroke="#0a0a12" stroke-opacity="0.7" stroke-width="4.9"/>
<path d="M1007.2,980.0C1032.7,764.0 1058.2,548.0 1083.7,548.0C1109.2,548.0 1134.7,836.0 1160.2,836.0C1185.7,836.0 1211.2,692.0 1236.7,692.0C1262.2,692.0 1287.7,764.0 1313.2,836.0C1338.7,908.0 1364.2,1124.0 1389.7,1124.0C1415.2,1124.0 1440.7,1052.0 1466.2,980.0C1491.7,908.0 1517.2,692.0 1542.7,692.0C1568.2,692.0 1593.7,980.0 1619.2,980.0L1695.7,980.0C1721.2,980.0 1746.7,404.0 1772.2,404.0C1797.7,404.0 1823.2,692.0 1848.7,692.0C1874.2,692.0 1899.7,548.0 1925.2,548.0C1950.7,548.0 1976.2,1124.0 2001.7,1124.0C2027.2,1124.0 2052.7,788.0 2078.2,692.0C2103.7,596.0 2129.2,548.0 2154.7,548.0C2180.2,548.0 2205.7,1124.0 2231.2,1124.0C2256.7,1124.0 2282.2,980.0 2307.7,980.0C2333.2,980.0 2358.7,1124.0 2384.2,1124.0L2460.7,1124.0C2486.2,1124.0 2511.7,980.0 2537.2,980.0L2613.7,980.0C2639.2,980.0 2664.7,836.0 2690.2,836.0C2715.7,836.0 2741.2,980.0 2766.7,1124.0" stroke="#c59c58" stroke-width="3.3"/>
</g></svg>
<div class="t" style="left:831px;width:100px;text-align:right;top:392.0px;font-size:25px;letter-spacing:0.3px;color:#6e6f73;-webkit-text-stroke:0.5px #6e6f73;transform:scale(1.1,0.92);transform-origin:100% 80%">5</div>
<div class="t" style="left:831px;width:100px;text-align:right;top:464.0px;font-size:25px;letter-spacing:0.3px;color:#6e6f73;-webkit-text-stroke:0.5px #6e6f73;transform:scale(1.1,0.92);transform-origin:100% 80%">4.5</div>
<div class="t" style="left:831px;width:100px;text-align:right;top:536.0px;font-size:25px;letter-spacing:0.3px;color:#6e6f73;-webkit-text-stroke:0.5px #6e6f73;transform:scale(1.1,0.92);transform-origin:100% 80%">4</div>
<div class="t" style="left:831px;width:100px;text-align:right;top:608.0px;font-size:25px;letter-spacing:0.3px;color:#6e6f73;-webkit-text-stroke:0.5px #6e6f73;transform:scale(1.1,0.92);transform-origin:100% 80%">3.5</div>
<div class="t" style="left:831px;width:100px;text-align:right;top:680.0px;font-size:25px;letter-spacing:0.3px;color:#6e6f73;-webkit-text-stroke:0.5px #6e6f73;transform:scale(1.1,0.92);transform-origin:100% 80%">3</div>
<div class="t" style="left:831px;width:100px;text-align:right;top:752.0px;font-size:25px;letter-spacing:0.3px;color:#6e6f73;-webkit-text-stroke:0.5px #6e6f73;transform:scale(1.1,0.92);transform-origin:100% 80%">2.5</div>
<div class="t" style="left:831px;width:100px;text-align:right;top:824.0px;font-size:25px;letter-spacing:0.3px;color:#6e6f73;-webkit-text-stroke:0.5px #6e6f73;transform:scale(1.1,0.92);transform-origin:100% 80%">2</div>
<div class="t" style="left:831px;width:100px;text-align:right;top:896.0px;font-size:25px;letter-spacing:0.3px;color:#6e6f73;-webkit-text-stroke:0.5px #6e6f73;transform:scale(1.1,0.92);transform-origin:100% 80%">1.5</div>
<div class="t" style="left:831px;width:100px;text-align:right;top:968.0px;font-size:25px;letter-spacing:0.3px;color:#6e6f73;-webkit-text-stroke:0.5px #6e6f73;transform:scale(1.1,0.92);transform-origin:100% 80%">1</div>
<div class="t" style="left:831px;width:100px;text-align:right;top:1040.0px;font-size:25px;letter-spacing:0.3px;color:#6e6f73;-webkit-text-stroke:0.5px #6e6f73;transform:scale(1.1,0.92);transform-origin:100% 80%">0.5</div>
<div class="t" style="left:831px;width:100px;text-align:right;top:1112.0px;font-size:25px;letter-spacing:0.3px;color:#6e6f73;-webkit-text-stroke:0.5px #6e6f73;transform:scale(1.1,0.92);transform-origin:100% 80%">0</div>
<div class="t" style="left:856.8px;width:300px;text-align:center;top:1162.2px;font-size:25px;letter-spacing:0.8px;color:#6e6f73;-webkit-text-stroke:0.4px #6e6f73">Nov 27</div>
<div class="t" style="left:1086.3px;width:300px;text-align:center;top:1162.2px;font-size:25px;letter-spacing:0.8px;color:#6e6f73;-webkit-text-stroke:0.4px #6e6f73">Nov 27, 6pm</div>
<div class="t" style="left:1315.8px;width:300px;text-align:center;top:1162.2px;font-size:25px;letter-spacing:0.8px;color:#6e6f73;-webkit-text-stroke:0.4px #6e6f73">Nov 27, 9pm</div>
<div class="t" style="left:1545.3px;width:300px;text-align:center;top:1162.2px;font-size:25px;letter-spacing:0.8px;color:#6e6f73;-webkit-text-stroke:0.4px #6e6f73">Nov 28</div>
<div class="t" style="left:1774.8px;width:300px;text-align:center;top:1162.2px;font-size:25px;letter-spacing:0.8px;color:#6e6f73;-webkit-text-stroke:0.4px #6e6f73">Nov 28, 3am</div>
<div class="t" style="left:2004.3px;width:300px;text-align:center;top:1162.2px;font-size:25px;letter-spacing:0.8px;color:#6e6f73;-webkit-text-stroke:0.4px #6e6f73">Nov 28, 6am</div>
<div class="t" style="left:2233.8px;width:300px;text-align:center;top:1162.2px;font-size:25px;letter-spacing:0.8px;color:#6e6f73;-webkit-text-stroke:0.4px #6e6f73">Nov 28, 9am</div>
<div class="t" style="left:2463.3px;width:300px;text-align:center;top:1162.2px;font-size:25px;letter-spacing:0.8px;color:#6e6f73;-webkit-text-stroke:0.4px #6e6f73">Nov 28, 12pm</div>
<div class="b" style="left:886px;top:1290px;width:1949px;height:460px;border-radius:17px 17px 0 0;background:transparent;overflow:visible"><div class="b" style="left:2px;top:2px;width:1945px;height:460px">
<div class="b" style="left:0;top:73px;width:1945px;height:400px;background:#1b1c21"></div>
<div class="b" style="left:0;top:0;width:1945px;height:73px;background:#22242d"></div>
<div class="b" style="left:0;top:72px;width:1945px;height:2px;background:#31333b"></div>
<div class="b" style="left:0;top:148px;width:1945px;height:2px;background:#31333b"></div>
<div class="b" style="left:0;top:224px;width:1945px;height:2px;background:#31333b"></div>
<div class="b" style="left:0;top:300px;width:1945px;height:2px;background:#31333b"></div>
<div class="b" style="left:0;top:376px;width:1945px;height:2px;background:#31333b"></div>
<div class="b" style="left:64px;top:0;width:2px;height:460px;background:#31333b"></div>
<div class="b" style="left:666px;top:0;width:2px;height:460px;background:#31333b"></div>
<div class="b" style="left:998px;top:0;width:2px;height:460px;background:#31333b"></div>
<div class="b" style="left:1198px;top:0;width:2px;height:460px;background:#31333b"></div>
<div class="b" style="left:1398px;top:0;width:2px;height:460px;background:#31333b"></div>
<div class="b" style="left:1598px;top:0;width:2px;height:460px;background:#31333b"></div>
<div class="b" style="left:1798px;top:0;width:2px;height:460px;background:#31333b"></div>
</div></div>
<div class="b" style="left:886px;top:1290px;width:1949px;height:470px;border:2px solid #31333b;border-radius:18px 18px 0 0;box-sizing:border-box"></div>
<div class="b" style="left:901px;top:1309.2px;width:37.6px;height:37.6px;border-radius:9px;background:#6f6e7a"></div>
<svg style="position:absolute;left:901px;top:1309.2px" width="37.6" height="37.6" viewBox="0 0 40 40"><path d="M10.2 19.8 L16.5 25.8 L28.9 13.1" stroke="#22232b" stroke-width="3.6" fill="none" stroke-linecap="round" stroke-linejoin="round"/></svg>
<div class="t" style="left:968.64px;top:1315.7px;font-size:26px;color:#75767b;font-weight:400;letter-spacing:0.065px;font-family:'Liberation Sans', sans-serif;-webkit-text-stroke:0.6px #75767b;">Paywall Name</div>
<div class="t" style="left:1570.02px;top:1315.7px;font-size:26px;color:#75767b;font-weight:400;letter-spacing:-0.072px;font-family:'Liberation Sans', sans-serif;-webkit-text-stroke:0.6px #75767b;">Series</div>
<div class="t" style="left:1902.52px;top:1315.7px;font-size:26px;color:#75767b;font-weight:400;letter-spacing:-0.288px;font-family:'Liberation Sans', sans-serif;-webkit-text-stroke:0.6px #75767b;">Nov 27, 3pm</div>
<div class="t" style="left:2102.52px;top:1315.7px;font-size:26px;color:#75767b;font-weight:400;letter-spacing:-0.288px;font-family:'Liberation Sans', sans-serif;-webkit-text-stroke:0.6px #75767b;">Nov 27, 4pm</div>
<div class="t" style="left:2302.52px;top:1315.7px;font-size:26px;color:#75767b;font-weight:400;letter-spacing:-0.288px;font-family:'Liberation Sans', sans-serif;-webkit-text-stroke:0.6px #75767b;">Nov 27, 5pm</div>
<div class="t" style="left:2502.52px;top:1315.7px;font-size:26px;color:#75767b;font-weight:400;letter-spacing:-0.288px;font-family:'Liberation Sans', sans-serif;-webkit-text-stroke:0.6px #75767b;">Nov 27, 6pm</div>
<div class="b" style="left:2688px;top:1300px;width:145px;height:60px;overflow:hidden"><div class="t" style="left:14.52px;top:15.7px;font-size:26px;color:#75767b;letter-spacing:-0.288px;-webkit-text-stroke:0.6px #75767b;">Nov 27, 7pm</div></div>
<div class="b" style="left:900px;top:1382px;width:40px;height:40px;border-radius:9px;background:#98fbee"></div>
<svg style="position:absolute;left:900px;top:1382px" width="40" height="40" viewBox="0 0 40 40"><path d="M10.2 19.8 L16.5 25.8 L28.9 13.1" stroke="#22232b" stroke-width="4" fill="none" stroke-linecap="round" stroke-linejoin="round"/></svg>
<div class="t" style="left:970.44px;top:1388.7px;font-size:28px;color:#f4f4f5;font-weight:400;letter-spacing:0.120px;font-family:'Liberation Sans', sans-serif;-webkit-text-stroke:0.5px #f4f4f5">Test #2L | Control | $59.99, $9.99</div>
<div class="t" style="left:1572.56px;top:1388.7px;font-size:28px;color:#f4f4f5;font-weight:400;letter-spacing:0.441px;font-family:'Liberation Sans', sans-serif;-webkit-text-stroke:0.5px #f4f4f5">Transaction Completes</div>
<div class="t" style="left:1903.00px;top:1388.8px;font-size:31px;color:#f4f4f5;font-weight:400;letter-spacing:0.000px;font-family:'Liberation Mono', monospace;">4</div>
<svg style="position:absolute;left:2101.6px;top:1389.8px" width="20" height="26" viewBox="0 0 20 26"><rect x="4.3" y="3.6" width="11.4" height="18.8" rx="5.7" ry="5.7" fill="none" stroke="#77787d" stroke-width="2.9"/><path d="M6 17.8 L14 8.2" stroke="#77787d" stroke-width="2.7" stroke-linecap="butt"/></svg>
<svg style="position:absolute;left:2301.6px;top:1389.8px" width="20" height="26" viewBox="0 0 20 26"><rect x="4.3" y="3.6" width="11.4" height="18.8" rx="5.7" ry="5.7" fill="none" stroke="#77787d" stroke-width="2.9"/><path d="M6 17.8 L14 8.2" stroke="#77787d" stroke-width="2.7" stroke-linecap="butt"/></svg>
<svg style="position:absolute;left:2501.6px;top:1389.8px" width="20" height="26" viewBox="0 0 20 26"><rect x="4.3" y="3.6" width="11.4" height="18.8" rx="5.7" ry="5.7" fill="none" stroke="#77787d" stroke-width="2.9"/><path d="M6 17.8 L14 8.2" stroke="#77787d" stroke-width="2.7" stroke-linecap="butt"/></svg>
<svg style="position:absolute;left:2701.6px;top:1389.8px" width="20" height="26" viewBox="0 0 20 26"><rect x="4.3" y="3.6" width="11.4" height="18.8" rx="5.7" ry="5.7" fill="none" stroke="#77787d" stroke-width="2.9"/><path d="M6 17.8 L14 8.2" stroke="#77787d" stroke-width="2.7" stroke-linecap="butt"/></svg>
<div class="b" style="left:900px;top:1458px;width:40px;height:40px;border-radius:9px;background:#6fc07e"></div>
<svg style="position:absolute;left:900px;top:1458px" width="40" height="40" viewBox="0 0 40 40"><path d="M10.2 19.8 L16.5 25.8 L28.9 13.1" stroke="#22232b" stroke-width="4" fill="none" stroke-linecap="round" stroke-linejoin="round"/></svg>
<div class="t" style="left:970.44px;top:1464.7px;font-size:28px;color:#f4f4f5;font-weight:400;letter-spacing:-0.141px;font-family:'Liberation Sans', sans-serif;-webkit-text-stroke:0.5px #f4f4f5">Test #2L | V1 | $29.99, $4.99</div>
<div class="t" style="left:1572.56px;top:1464.7px;font-size:28px;color:#f4f4f5;font-weight:400;letter-spacing:0.441px;font-family:'Liberation Sans', sans-serif;-webkit-text-stroke:0.5px #f4f4f5">Transaction Completes</div>
<svg style="position:absolute;left:1901.6px;top:1465.8px" width="20" height="26" viewBox="0 0 20 26"><rect x="4.3" y="3.6" width="11.4" height="18.8" rx="5.7" ry="5.7" fill="none" stroke="#77787d" stroke-width="2.9"/><path d="M6 17.8 L14 8.2" stroke="#77787d" stroke-width="2.7" stroke-linecap="butt"/></svg>
<svg style="position:absolute;left:2101.6px;top:1465.8px" width="20" height="26" viewBox="0 0 20 26"><rect x="4.3" y="3.6" width="11.4" height="18.8" rx="5.7" ry="5.7" fill="none" stroke="#77787d" stroke-width="2.9"/><path d="M6 17.8 L14 8.2" stroke="#77787d" stroke-width="2.7" stroke-linecap="butt"/></svg>
<svg style="position:absolute;left:2301.6px;top:1465.8px" width="20" height="26" viewBox="0 0 20 26"><rect x="4.3" y="3.6" width="11.4" height="18.8" rx="5.7" ry="5.7" fill="none" stroke="#77787d" stroke-width="2.9"/><path d="M6 17.8 L14 8.2" stroke="#77787d" stroke-width="2.7" stroke-linecap="butt"/></svg>
<svg style="position:absolute;left:2501.6px;top:1465.8px" width="20" height="26" viewBox="0 0 20 26"><rect x="4.3" y="3.6" width="11.4" height="18.8" rx="5.7" ry="5.7" fill="none" stroke="#77787d" stroke-width="2.9"/><path d="M6 17.8 L14 8.2" stroke="#77787d" stroke-width="2.7" stroke-linecap="butt"/></svg>
<div class="t" style="left:2703.00px;top:1464.8px;font-size:31px;color:#f4f4f5;font-weight:400;letter-spacing:0.000px;font-family:'Liberation Mono', monospace;">1</div>
<div class="b" style="left:900px;top:1534px;width:40px;height:40px;border-radius:9px;background:#739bc5"></div>
<svg style="position:absolute;left:900px;top:1534px" width="40" height="40" viewBox="0 0 40 40"><path d="M10.2 19.8 L16.5 25.8 L28.9 13.1" stroke="#22232b" stroke-width="4" fill="none" stroke-linecap="round" stroke-linejoin="round"/></svg>
<div class="t" style="left:970.44px;top:1540.7px;font-size:28px;color:#f4f4f5;font-weight:400;letter-spacing:0.090px;font-family:'Liberation Sans', sans-serif;-webkit-text-stroke:0.5px #f4f4f5">Test #2L | V2 | $24.99, $3.99</div>
<div class="t" style="left:1572.56px;top:1540.7px;font-size:28px;color:#f4f4f5;font-weight:400;letter-spacing:0.441px;font-family:'Liberation Sans', sans-serif;-webkit-text-stroke:0.5px #f4f4f5">Transaction Completes</div>
<div class="t" style="left:1903.00px;top:1540.8px;font-size:31px;color:#f4f4f5;font-weight:400;letter-spacing:0.000px;font-family:'Liberation Mono', monospace;">1</div>
<svg style="position:absolute;left:2101.6px;top:1541.8px" width="20" height="26" viewBox="0 0 20 26"><rect x="4.3" y="3.6" width="11.4" height="18.8" rx="5.7" ry="5.7" fill="none" stroke="#77787d" stroke-width="2.9"/><path d="M6 17.8 L14 8.2" stroke="#77787d" stroke-width="2.7" stroke-linecap="butt"/></svg>
<svg style="position:absolute;left:2301.6px;top:1541.8px" width="20" height="26" viewBox="0 0 20 26"><rect x="4.3" y="3.6" width="11.4" height="18.8" rx="5.7" ry="5.7" fill="none" stroke="#77787d" stroke-width="2.9"/><path d="M6 17.8 L14 8.2" stroke="#77787d" stroke-width="2.7" stroke-linecap="butt"/></svg>
<div class="t" style="left:2503.00px;top:1540.8px;font-size:31px;color:#f4f4f5;font-weight:400;letter-spacing:0.000px;font-family:'Liberation Mono', monospace;">1</div>
<svg style="position:absolute;left:2701.6px;top:1541.8px" width="20" height="26" viewBox="0 0 20 26"><rect x="4.3" y="3.6" width="11.4" height="18.8" rx="5.7" ry="5.7" fill="none" stroke="#77787d" stroke-width="2.9"/><path d="M6 17.8 L14 8.2" stroke="#77787d" stroke-width="2.7" stroke-linecap="butt"/></svg>
<div class="b" style="left:900px;top:1610px;width:40px;height:40px;border-radius:9px;background:#bc7873"></div>
<svg style="position:absolute;left:900px;top:1610px" width="40" height="40" viewBox="0 0 40 40"><path d="M10.2 19.8 L16.5 25.8 L28.9 13.1" stroke="#22232b" stroke-width="4" fill="none" stroke-linecap="round" stroke-linejoin="round"/></svg>
<div class="t" style="left:970.44px;top:1616.7px;font-size:28px;color:#f4f4f5;font-weight:400;letter-spacing:0.096px;font-family:'Liberation Sans', sans-serif;-webkit-text-stroke:0.5px #f4f4f5">Test #3L | Today Tab | Control | $59.99, $9.99</div>
<div class="t" style="left:1572.56px;top:1616.7px;font-size:28px;color:#f4f4f5;font-weight:400;letter-spacing:0.441px;font-family:'Liberation Sans', sans-serif;-webkit-text-stroke:0.5px #f4f4f5">Transaction Completes</div>
<div class="t" style="left:1903.00px;top:1616.8px;font-size:31px;color:#f4f4f5;font-weight:400;letter-spacing:0.000px;font-family:'Liberation Mono', monospace;">1</div>
<div class="t" style="left:2103.00px;top:1616.8px;font-size:31px;color:#f4f4f5;font-weight:400;letter-spacing:0.000px;font-family:'Liberation Mono', monospace;">1</div>
<svg style="position:absolute;left:2301.6px;top:1617.8px" width="20" height="26" viewBox="0 0 20 26"><rect x="4.3" y="3.6" width="11.4" height="18.8" rx="5.7" ry="5.7" fill="none" stroke="#77787d" stroke-width="2.9"/><path d="M6 17.8 L14 8.2" stroke="#77787d" stroke-width="2.7" stroke-linecap="butt"/></svg>
<div class="t" style="left:2503.00px;top:1616.8px;font-size:31px;color:#f4f4f5;font-weight:400;letter-spacing:0.000px;font-family:'Liberation Mono', monospace;">2</div>
<svg style="position:absolute;left:2701.6px;top:1617.8px" width="20" height="26" viewBox="0 0 20 26"><rect x="4.3" y="3.6" width="11.4" height="18.8" rx="5.7" ry="5.7" fill="none" stroke="#77787d" stroke-width="2.9"/><path d="M6 17.8 L14 8.2" stroke="#77787d" stroke-width="2.7" stroke-linecap="butt"/></svg>
<div class="b" style="left:900px;top:1686px;width:40px;height:40px;border-radius:9px;background:#c49b58"></div>
<svg style="position:absolute;left:900px;top:1686px" width="40" height="40" viewBox="0 0 40 40"><path d="M10.2 19.8 L16.5 25.8 L28.9 13.1" stroke="#22232b" stroke-width="4" fill="none" stroke-linecap="round" stroke-linejoin="round"/></svg>
<div class="t" style="left:970.44px;top:1692.7px;font-size:28px;color:#f4f4f5;font-weight:400;letter-spacing:-0.090px;font-family:'Liberation Sans', sans-serif;-webkit-text-stroke:0.5px #f4f4f5">Test #3L | Today Tab | V1 | $29.99, $4.99</div>
<div class="t" style="left:1572.56px;top:1692.7px;font-size:28px;color:#f4f4f5;font-weight:400;letter-spacing:0.441px;font-family:'Liberation Sans', sans-serif;-webkit-text-stroke:0.5px #f4f4f5">Transaction Completes</div>
<div class="t" style="left:1903.00px;top:1692.8px;font-size:31px;color:#f4f4f5;font-weight:400;letter-spacing:0.000px;font-family:'Liberation Mono', monospace;">2</div>
<div class="t" style="left:2103.00px;top:1692.8px;font-size:31px;color:#f4f4f5;font-weight:400;letter-spacing:0.000px;font-family:'Liberation Mono', monospace;">1</div>
<div class="t" style="left:2303.00px;top:1692.8px;font-size:31px;color:#f4f4f5;font-weight:400;letter-spacing:0.000px;font-family:'Liberation Mono', monospace;">1</div>
<div class="t" style="left:2503.00px;top:1692.8px;font-size:31px;color:#f4f4f5;font-weight:400;letter-spacing:0.000px;font-family:'Liberation Mono', monospace;">1</div>
<div class="t" style="left:2703.00px;top:1692.8px;font-size:31px;color:#f4f4f5;font-weight:400;letter-spacing:0.000px;font-family:'Liberation Mono', monospace;">1</div>
</div></body></html>
